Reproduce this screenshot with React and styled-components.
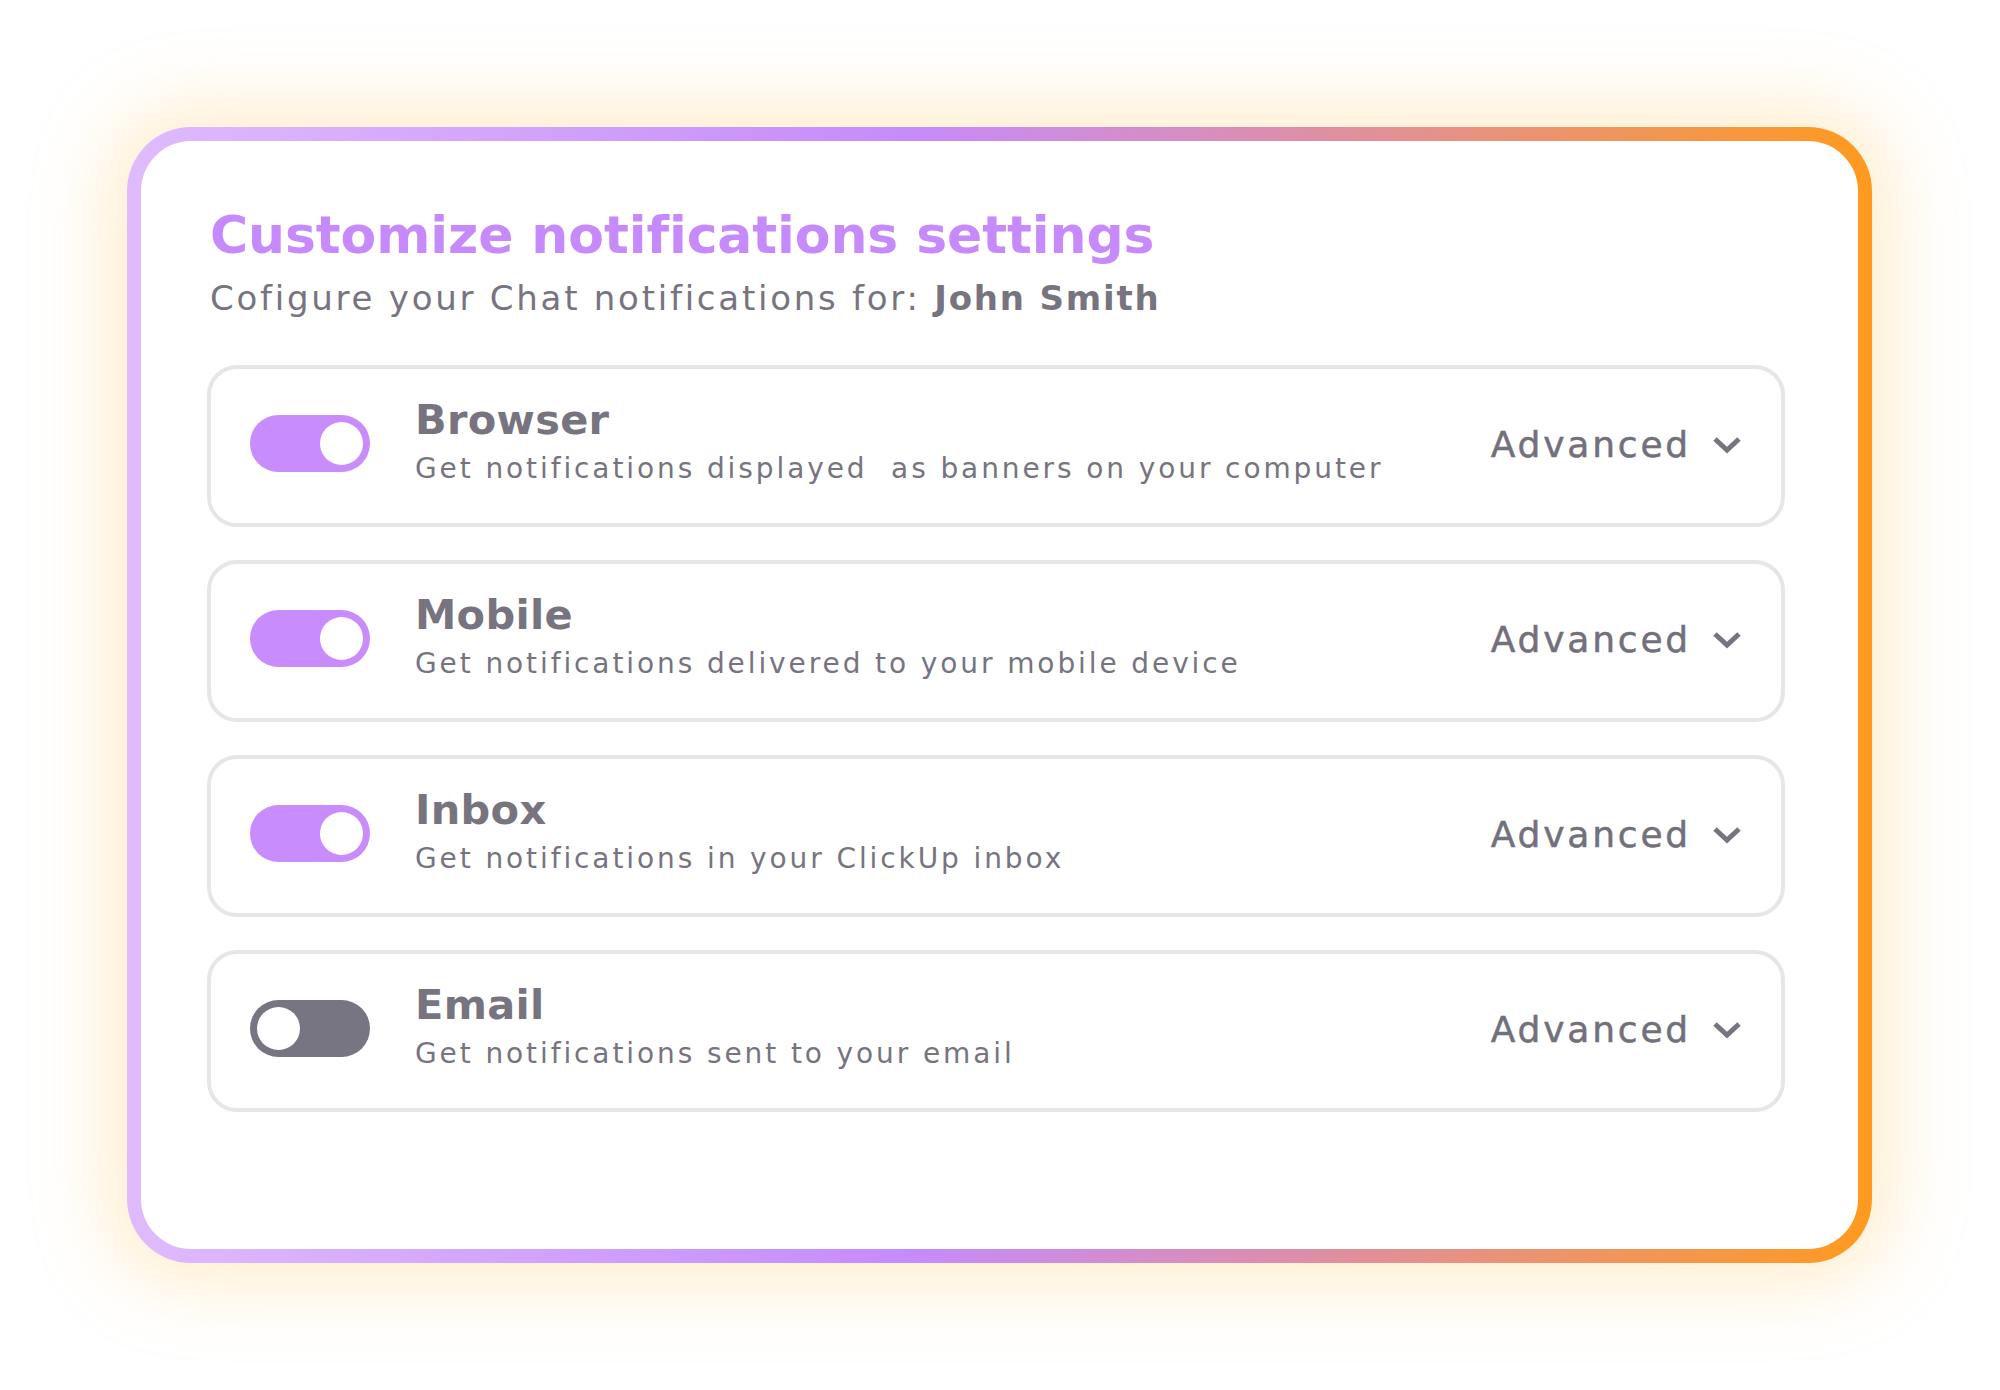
import React from 'react';
import styled, { createGlobalStyle } from 'styled-components';

const GlobalStyle = createGlobalStyle`
  html, body {
    margin: 0;
    padding: 0;
    background: #ffffff;
  }
  body {
    font-family: 'DejaVu Sans', 'Open Sans', sans-serif;
  }
`;

const Page = styled.div`
  width: 2000px;
  height: 1390px;
  box-sizing: border-box;
  padding: 127px 0 0 127px;
  background: #ffffff;
`;

const Card = styled.div`
  width: 1745px;
  height: 1136px;
  box-sizing: border-box;
  border: 14px solid transparent;
  border-radius: 64px;
  background:
    linear-gradient(#ffffff, #ffffff) padding-box,
    linear-gradient(90deg, #dfbbfd 0%, #c68bfb 45%, #dc8eae 66%, #ff9a1e 100%) border-box;
  box-shadow: 0 0 70px 22px rgba(255, 210, 130, 0.38);
  padding: 68px 66px 0 66px;
  display: flex;
  flex-direction: column;
`;

const Title = styled.h1`
  margin: 0 0 0 3px;
  font-size: 52px;
  line-height: 1;
  font-weight: 700;
  color: #c68afc;
  letter-spacing: -0.1px;
`;

const Subtitle = styled.p`
  margin: 20px 0 0 3px;
  font-size: 34px;
  line-height: 1;
  font-weight: 400;
  color: #77747f;
  letter-spacing: 2.75px;
  b {
    font-weight: 700;
    letter-spacing: 1.8px;
  }
`;

const List = styled.div`
  margin-top: 50px;
  display: flex;
  flex-direction: column;
  gap: 33px;
`;

const Row = styled.div`
  width: 1578px;
  height: 162px;
  box-sizing: border-box;
  border: 4px solid #e6e6e6;
  border-radius: 30px;
  padding: 0 39px 0 39px;
  display: flex;
  align-items: center;
`;

const Toggle = styled.div`
  width: 120px;
  height: 57px;
  flex: none;
  border-radius: 29px;
  background: ${p => (p.on ? '#c88cfd' : '#787582')};
  display: flex;
  align-items: center;
  justify-content: ${p => (p.on ? 'flex-end' : 'flex-start')};
  padding: 0 7px;
  box-sizing: border-box;
  margin-top: -5px;
`;

const Knob = styled.div`
  width: 43px;
  height: 43px;
  border-radius: 50%;
  background: #ffffff;
`;

const Texts = styled.div`
  margin: -10px 0 0 45px;
  flex: 1;
  display: flex;
  flex-direction: column;
  gap: 15px;
`;

const RowTitle = styled.div`
  font-size: 41.5px;
  line-height: 1;
  font-weight: 700;
  color: #77747f;
  letter-spacing: 0.3px;
`;

const RowDesc = styled.div`
  font-size: 28px;
  line-height: 1;
  font-weight: 400;
  color: #77747f;
  letter-spacing: 2.9px;
  white-space: pre;
`;

const Advanced = styled.div`
  display: flex;
  align-items: center;
  gap: 21px;
  font-size: 36px;
  line-height: 1;
  font-weight: 400;
  color: #72707b;
  letter-spacing: 2.8px;
  margin-top: -3px;
  -webkit-text-stroke: 0.5px #72707b;
`;

const Chevron = () => (
  <svg width="30" height="18" viewBox="0 0 30 18" fill="none">
    <path d="M3 3 L15 14 L27 3" stroke="#77747f" strokeWidth="5" strokeLinejoin="miter" />
  </svg>
);

const channels = [
  { name: 'Browser', desc: 'Get notifications displayed  as banners on your computer', on: true },
  { name: 'Mobile', desc: 'Get notifications delivered to your mobile device', on: true },
  { name: 'Inbox', desc: 'Get notifications in your ClickUp inbox', on: true },
  { name: 'Email', desc: 'Get notifications sent to your email', on: false },
];

export default function App() {
  return (
    <>
      <GlobalStyle />
      <Page>
        <Card>
          <Title>Customize notifications settings</Title>
          <Subtitle>
            Cofigure your Chat notifications for: <b>John Smith</b>
          </Subtitle>
          <List>
            {channels.map(c => (
              <Row key={c.name}>
                <Toggle on={c.on}>
                  <Knob />
                </Toggle>
                <Texts>
                  <RowTitle>{c.name}</RowTitle>
                  <RowDesc>{c.desc}</RowDesc>
                </Texts>
                <Advanced>
                  Advanced
                  <Chevron />
                </Advanced>
              </Row>
            ))}
          </List>
        </Card>
      </Page>
    </>
  );
}
